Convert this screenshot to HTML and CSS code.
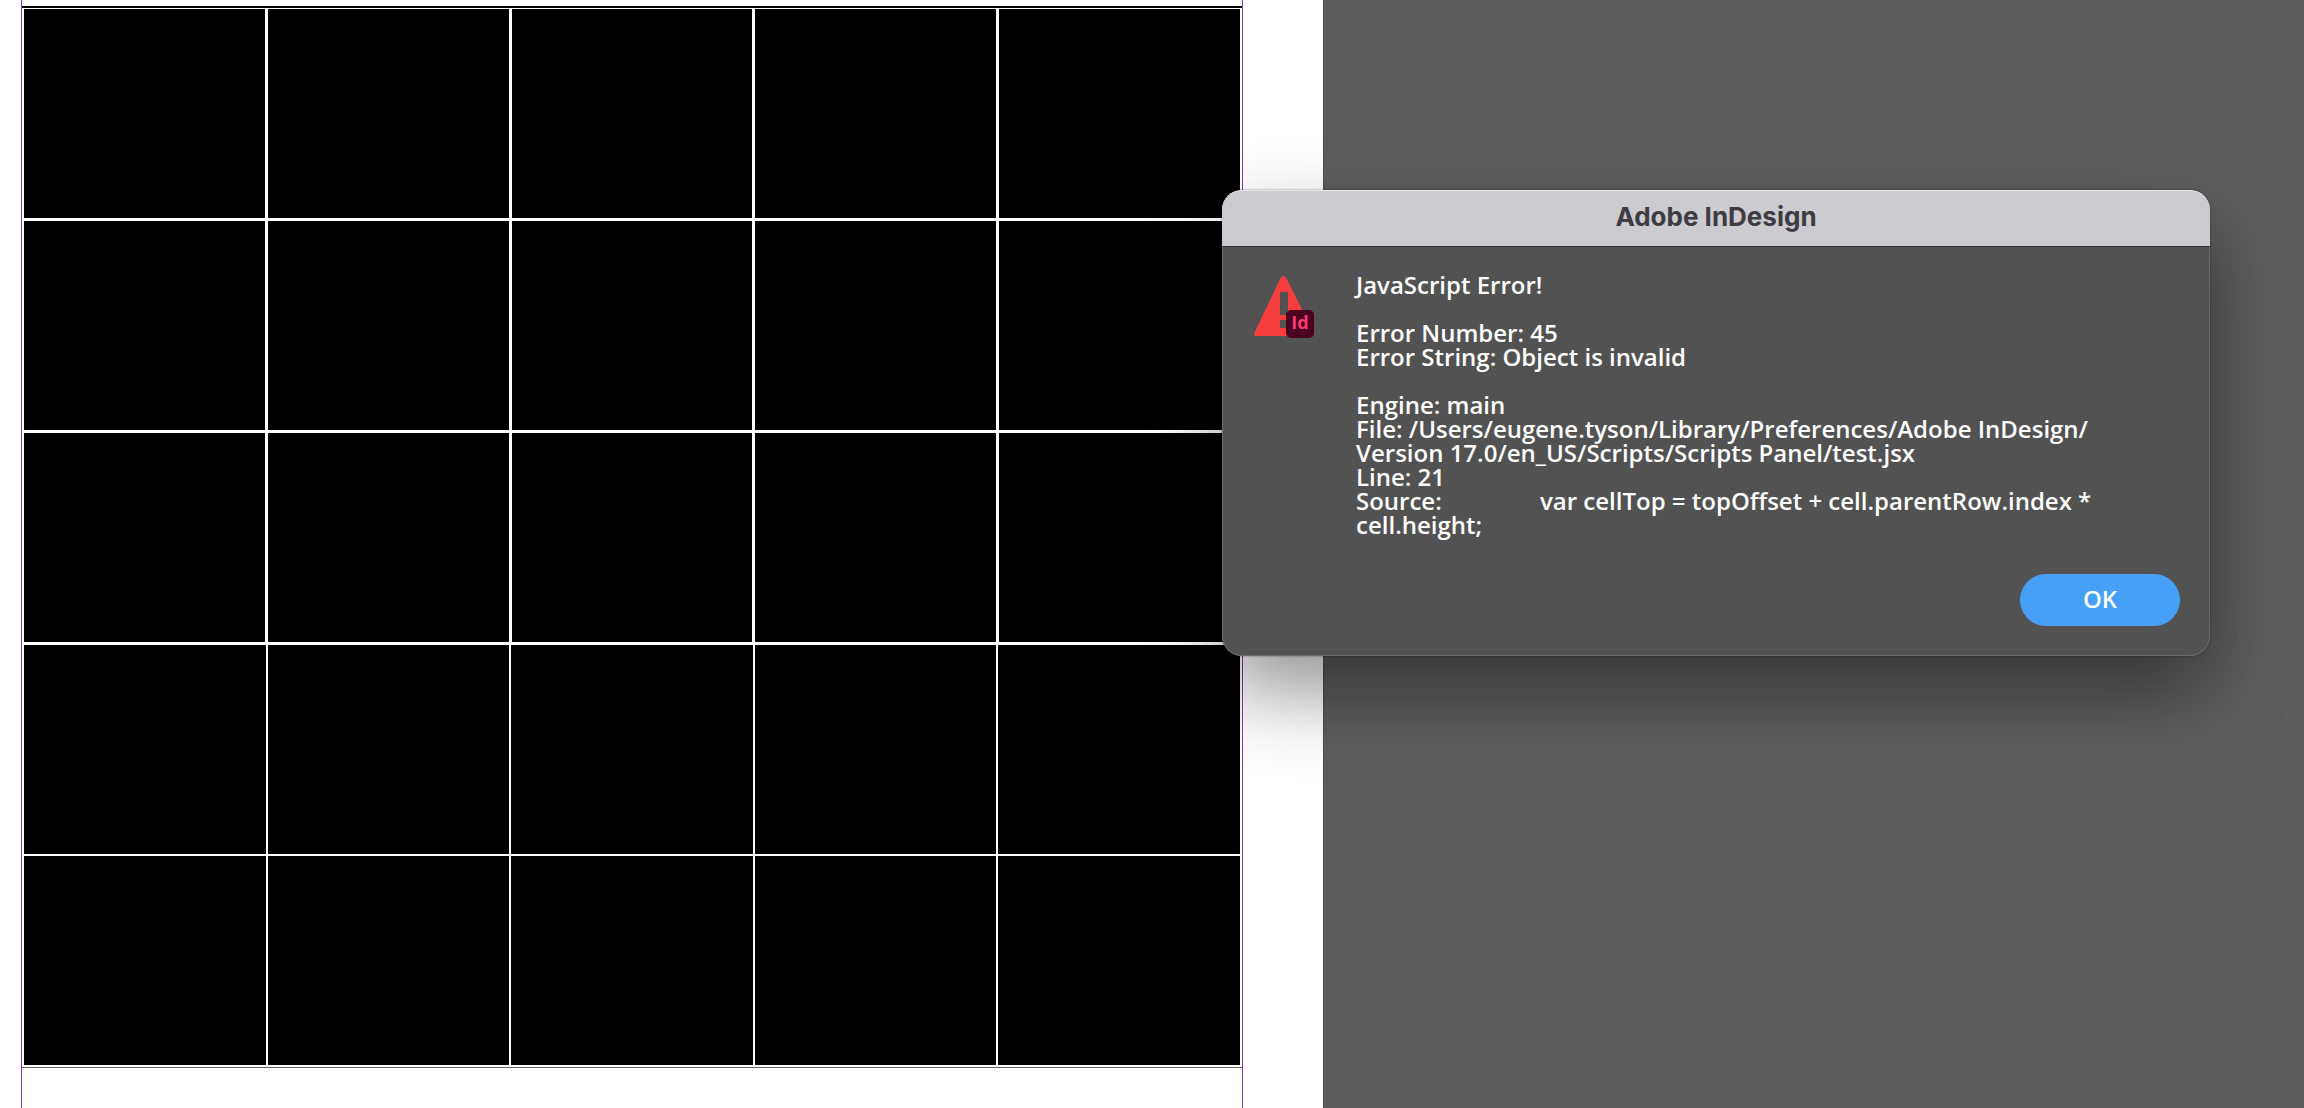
FILE: index.html
```html
<!DOCTYPE html>
<html lang="en">
<head>
  <meta charset="UTF-8">
  <meta name="viewport" content="width=device-width, initial-scale=1.0">
  <title>Adobe InDesign</title>
  <link rel="stylesheet" href="styles.css">
</head>
<body>
  <main class="workspace">
    <div class="page">
      <div class="frame">
        <div class="cells">
          <div class="row"><div></div><div></div><div></div><div></div><div></div></div>
          <div class="row"><div></div><div></div><div></div><div></div><div></div></div>
          <div class="row"><div></div><div></div><div></div><div></div><div></div></div>
          <div class="row thin"><div></div><div></div><div></div><div></div><div></div></div>
          <div class="row thin"><div></div><div></div><div></div><div></div><div></div></div>
        </div>
      </div>
    </div>
    <div class="pasteboard"></div>
  </main>

  <section class="dialog" role="alertdialog" aria-labelledby="dialogTitle" aria-describedby="dialogMessage">
    <h1 class="titlebar" id="dialogTitle">Adobe InDesign</h1>
    <div class="content">
      <svg class="alert-icon" width="62" height="64" viewBox="0 0 62 64" aria-hidden="true">
        <path fill="#f73e3e" fill-rule="evenodd" d="M26.500 2.200Q29.500-2 32.500 2.200L59.600 56.500Q60 60 56.500 60H3Q-1 60 .5 56.500ZM26 16V39H34V16ZM26 44V52H34V44Z"/>
        <rect x="32" y="34" width="28" height="28" rx="5" fill="#4a001e"/>
        <text class="badge-text" x="46" y="53" text-anchor="middle">Id</text>
      </svg>
      <div class="message" id="dialogMessage">JavaScript Error!

Error Number: 45
Error String: Object is invalid

Engine: main
File: /Users/eugene.tyson/Library/Preferences/Adobe InDesign/
Version 17.0/en_US/Scripts/Scripts Panel/test.jsx
Line: 21
Source:&#9;var cellTop = topOffset + cell.parentRow.index *
cell.height;</div>
    </div>
    <div class="actions">
      <button type="button" class="ok">OK</button>
    </div>
  </section>
</body>
</html>
```
FILE: styles.css
```css
* {
  box-sizing: border-box;
}
body {
  margin: 0;
  font-family: "Open Sans", sans-serif;
  background-color: #5d5d5d;
  overflow: hidden;
}
.workspace {
  display: grid;
  grid-template-columns: 1323fr 981fr;
  min-height: 100vh;
}
.page {
  display: flex;
  padding: 0 80px 0 21px;
  background-color: white;
}
.pasteboard {
  border-left: 1px solid #4c4c4c;
}
.frame {
  flex: 1;
  padding-top: 6px;
  border-left: 1px solid #7f3fa0;
  border-right: 1px solid #7f3fa0;
}
.cells {
  padding: 1px 0 2px;
  border-top: 2px solid black;
  border-bottom: 1px solid #666;
}
.row {
  display: flex;
  gap: 3px;
  height: 209px;
  margin: 0 2px 3px;
}
.row.thin {
  gap: 2px;
  margin-bottom: 2px;
}
.row:last-child {
  margin-bottom: 0;
}
.row div {
  flex: 1;
  background-color: black;
}
/* alert window floating over the document */
.dialog {
  position: absolute;
  top: 190px;
  left: 1222px;
  right: 94px;
  border-radius: 20px;
  background-color: #525252;
  box-shadow: inset 0 0 0 1px #6b6b6b, 0 0 2px rgba(0, 0, 0, 0.5), 0 36px 80px rgba(0, 0, 0, 0.42);
  color: white;
}
.titlebar {
  margin: 0;
  height: 57px;
  border-top: 1px solid #e8e7ea;
  border-bottom: 1px solid #353535;
  border-radius: 20px 20px 0 0;
  background-color: #cccbcf;
  color: #3d3c42;
  font-family: Inter, sans-serif;
  font-size: 26px;
  font-weight: 700;
  line-height: 51px;
  text-align: center;
}
.content {
  display: flex;
  gap: 40px;
  padding: 26px 32px 0;
}
.alert-icon {
  flex: none;
  margin-top: 3px;
}
.badge-text {
  fill: #ff3a70;
  font-size: 18px;
  font-weight: 700;
}
.message {
  flex: 1;
  font-size: 24px;
  font-weight: 600;
  line-height: 24px;
  white-space: pre;
  tab-size: 184px;
}
.actions {
  display: flex;
  justify-content: flex-end;
  padding: 37px 30px 30px;
}
.ok {
  width: 160px;
  height: 52px;
  padding: 0 0 4px;
  border: none;
  border-radius: 26px;
  background-color: #46a0f5;
  color: white;
  font-family: inherit;
  font-size: 24px;
  font-weight: 600;
  cursor: pointer;
}
.ok:hover {
  background-color: #3892e8;
}
```
